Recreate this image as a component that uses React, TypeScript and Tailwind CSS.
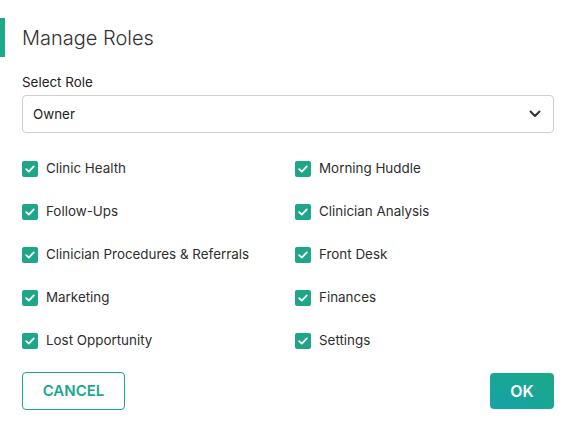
import React from "react";

const left = ["Clinic Health", "Follow-Ups", "Clinician Procedures & Referrals", "Marketing", "Lost Opportunity"];
const right = ["Morning Huddle", "Clinician Analysis", "Front Desk", "Finances", "Settings"];

function Check({ label }: { label: string }) {
  return (
    <div className="flex h-[43px] items-center gap-[8px]">
      <span className="flex h-[16px] w-[16px] items-center justify-center rounded-[2px] bg-[#1fa689]">
        <svg width="12" height="12" viewBox="0 0 12 12" fill="none">
          <path d="M2.2 6.2 L4.8 8.6 L9.8 3.4" stroke="white" strokeWidth="1.8" strokeLinecap="round" strokeLinejoin="round" />
        </svg>
      </span>
      <span className="text-[13.4px] text-[#2e2e2e]">{label}</span>
    </div>
  );
}

export default function App() {
  return (
    <div className="relative h-[436px] w-[571px] bg-white" style={{ fontFamily: "Inter, 'Noto Sans', sans-serif" }}>
      <div className="absolute left-0 top-[18px] h-[39px] w-[5px] bg-[#20a88a]" />
      <div className="pl-[22px] pr-[17px] pt-[24px]">
        <h1 className="text-[20px] leading-[28px] font-light text-[#333]">Manage Roles</h1>
        <div className="mt-[22px] text-[13.4px] leading-[16px] text-[#222]">Select Role</div>
        <div className="mt-[5px] flex h-[38px] w-[532px] items-center justify-between rounded-[4px] border border-[#cfcfcf] pl-[10px] pr-[12px]">
          <span className="text-[13.4px] text-[#222]">Owner</span>
          <svg width="12" height="8" viewBox="0 0 12 8" fill="none">
            <path d="M1.5 1.5 L6 6 L10.5 1.5" stroke="#333" strokeWidth="2" strokeLinecap="round" strokeLinejoin="round" />
          </svg>
        </div>
        <div className="mt-[14px] grid grid-cols-[273px_1fr]">
          <div className="flex flex-col">
            {left.map((l) => (
              <Check key={l} label={l} />
            ))}
          </div>
          <div className="flex flex-col">
            {right.map((l) => (
              <Check key={l} label={l} />
            ))}
          </div>
        </div>
        <div className="mt-[10px] flex items-center justify-between">
          <button className="flex h-[38px] w-[103px] items-center justify-center rounded-[4px] border border-[#1aa88c] text-[15px] font-semibold text-[#1aa88c]">
            CANCEL
          </button>
          <button className="flex h-[36px] w-[64px] items-center justify-center rounded-[4px] bg-gradient-to-tr from-[#15a3a8] to-[#1ca886] text-[16px] font-semibold text-white">
            OK
          </button>
        </div>
      </div>
    </div>
  );
}
